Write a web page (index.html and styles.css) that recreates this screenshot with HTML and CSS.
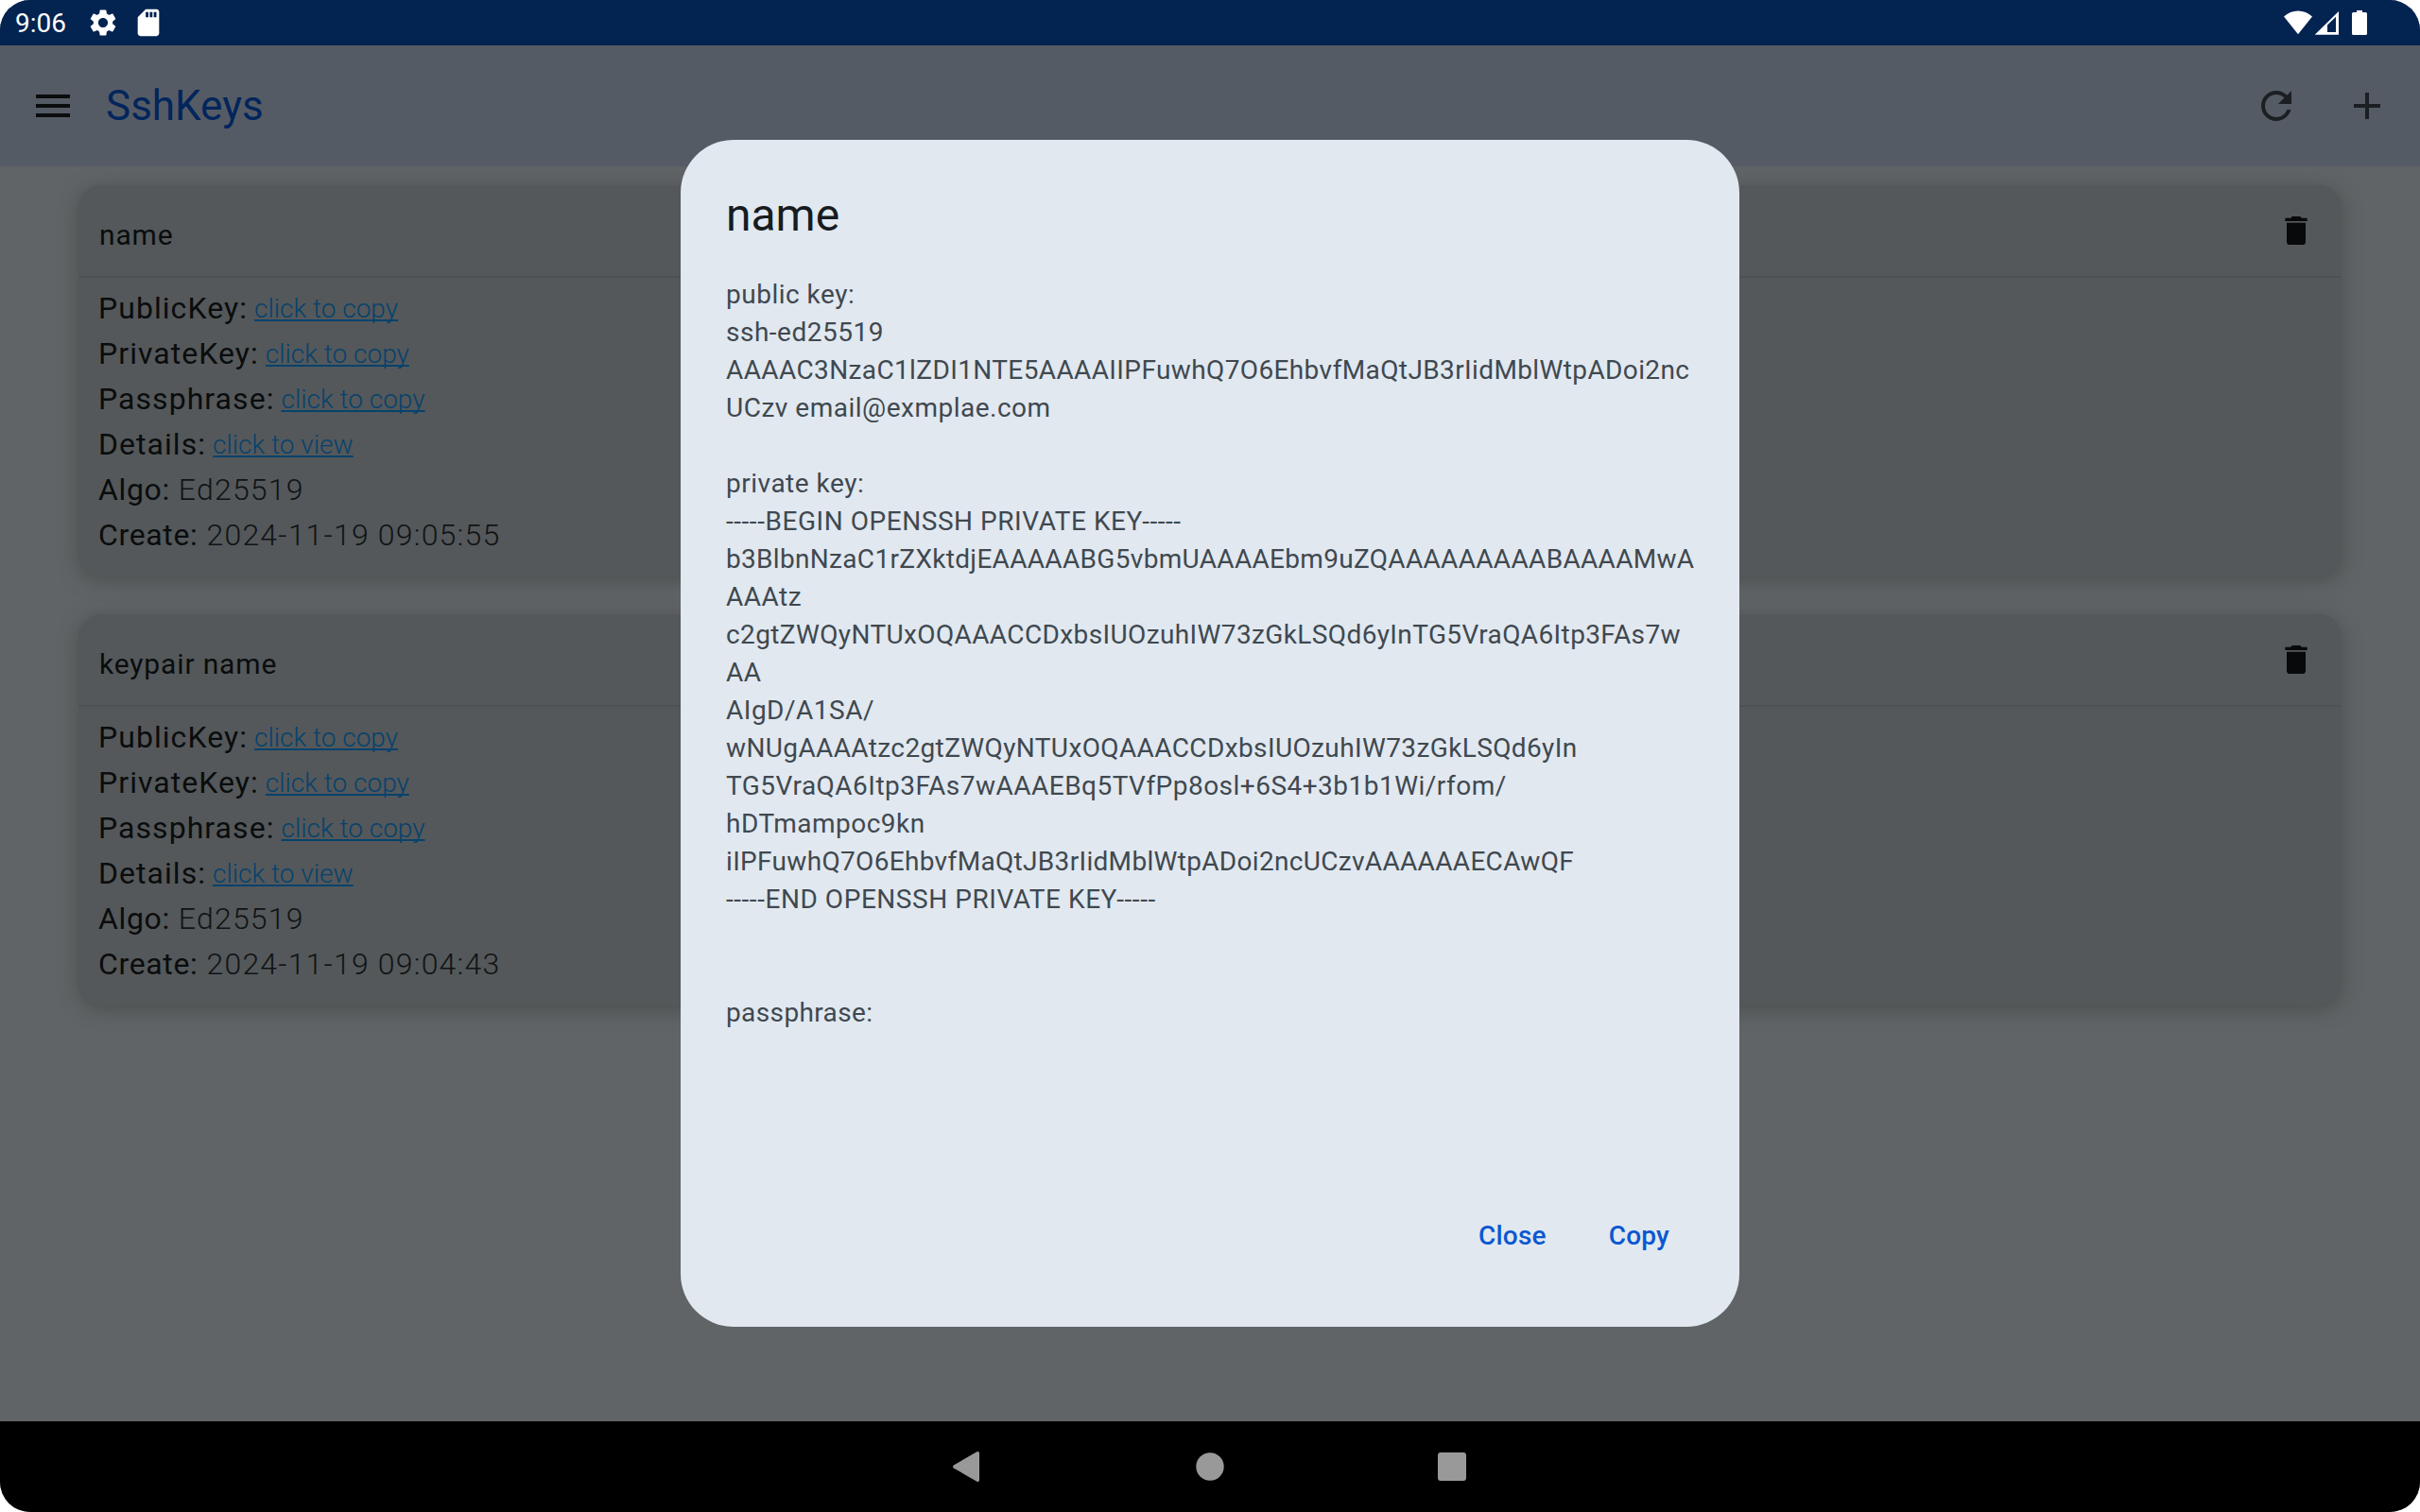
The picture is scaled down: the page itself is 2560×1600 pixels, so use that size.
FILE: index.html
```html
<!DOCTYPE html>
<html lang="en">
<head>
<meta charset="utf-8">
<title>SshKeys</title>
<link rel="stylesheet" href="styles.css">
</head>
<body>
<div class="screen">
  <header class="statusbar">
    <span class="clock">9:06</span>
    <svg class="status-icon" viewBox="0 0 24 24"><path d="M19.14 12.94c.04-.3.06-.61.06-.94 0-.32-.02-.64-.07-.94l2.03-1.58c.18-.14.23-.41.12-.61l-1.92-3.32c-.12-.22-.37-.29-.59-.22l-2.39.96c-.5-.38-1.03-.7-1.62-.94l-.36-2.54c-.04-.24-.24-.41-.48-.41h-3.84c-.24 0-.43.17-.47.41l-.36 2.54c-.59.24-1.13.57-1.62.94l-2.39-.96c-.22-.08-.47 0-.59.22L2.74 8.87c-.12.21-.08.47.12.61l2.03 1.58c-.05.3-.09.63-.09.94s.02.64.07.94l-2.03 1.58c-.18.14-.23.41-.12.61l1.92 3.32c.12.22.37.29.59.22l2.39-.96c.5.38 1.03.7 1.62.94l.36 2.54c.05.24.24.41.48.41h3.84c.24 0 .44-.17.47-.41l.36-2.54c.59-.24 1.13-.56 1.62-.94l2.39.96c.22.08.47 0 .59-.22l1.92-3.32c.12-.22.07-.47-.12-.61l-2.01-1.58zM12 15.6c-1.98 0-3.6-1.62-3.6-3.6s1.62-3.6 3.6-3.6 3.6 1.62 3.6 3.6-1.62 3.6-3.6 3.6z"/></svg>
    <svg class="status-icon" viewBox="0 0 24 24"><path d="M18 2h-8L4.02 8 4 20c0 1.1.9 2 2 2h12c1.1 0 2-.9 2-2V4c0-1.1-.9-2-2-2zm-6 6h-2V4h2v4zm3 0h-2V4h2v4zm3 0h-2V4h2v4z"/></svg>
    <svg class="system-icons" viewBox="0 0 96 48"><path d="M0 17.600Q6.500 11.400 15 11.400T30 17.600L15 36.300Z"/><path fill-rule="evenodd" d="M32.700 36.700L58 12V36.700ZM46 26.500V34H55V17.800Z"/><path d="M77 11h6v2h3.500q1.500 0 1.500 1.500v21q0 1.500-1.500 1.500h-13q-1.500 0-1.500-1.500v-21q0-1.500 1.500-1.500h3.500z"/></svg>
  </header>

  <nav class="appbar">
    <svg class="icon menu" viewBox="0 0 24 24"><path d="M3 18h18v-2H3v2zm0-5h18v-2H3v2zm0-7v2h18V6H3z"/></svg>
    <h1 class="app-title">SshKeys</h1>
    <svg class="icon" viewBox="0 0 24 24"><path d="M17.650 6.350C16.200 4.900 14.210 4 12 4c-4.420 0-7.990 3.580-7.990 8s3.570 8 7.990 8c3.730 0 6.840-2.550 7.730-6h-2.080c-.82 2.330-3.040 4-5.650 4-3.310 0-6-2.690-6-6s2.690-6 6-6c1.660 0 3.140.69 4.220 1.780L13 11h7V4l-2.350 2.350z"/></svg>
    <svg class="icon" viewBox="0 0 24 24"><path d="M19 13h-6v6h-2v-6H5v-2h6V5h2v6h6v2z"/></svg>
  </nav>

  <main class="content">
    <section class="card">
      <div class="card-head"><span class="card-name">name</span><svg class="trash" viewBox="0 0 24 24"><path d="M19 4h-3.500l-1-1h-5l-1 1H5v2h14M6 19a2 2 0 0 0 2 2h8a2 2 0 0 0 2-2V7H6v12z"/></svg></div>
      <div class="card-body">
        <p><b>PublicKey:</b><a>click to copy</a></p>
        <p><b>PrivateKey:</b><a>click to copy</a></p>
        <p><b>Passphrase:</b><a>click to copy</a></p>
        <p><b>Details:</b><a>click to view</a></p>
        <p><b class="plain">Algo:</b> Ed25519</p>
        <p><b class="plain">Create:</b> 2024-11-19 09:05:55</p>
      </div>
    </section>
    <section class="card">
      <div class="card-head"><span class="card-name">keypair name</span><svg class="trash" viewBox="0 0 24 24"><path d="M19 4h-3.500l-1-1h-5l-1 1H5v2h14M6 19a2 2 0 0 0 2 2h8a2 2 0 0 0 2-2V7H6v12z"/></svg></div>
      <div class="card-body">
        <p><b>PublicKey:</b><a>click to copy</a></p>
        <p><b>PrivateKey:</b><a>click to copy</a></p>
        <p><b>Passphrase:</b><a>click to copy</a></p>
        <p><b>Details:</b><a>click to view</a></p>
        <p><b class="plain">Algo:</b> Ed25519</p>
        <p><b class="plain">Create:</b> 2024-11-19 09:04:43</p>
      </div>
    </section>
  </main>

  <footer class="navbar">
    <svg viewBox="0 0 48 48"><path d="M8.800 22.400L33.400 8.300Q36 7.200 36 10V38Q36 40.800 33.400 39.700L8.800 25.600Q7.200 24 8.800 22.400Z"/></svg>
    <svg viewBox="0 0 48 48"><circle cx="24" cy="24" r="14.700"/></svg>
    <svg viewBox="0 0 48 48"><rect x="9" y="9" width="30" height="30" rx="3"/></svg>
  </footer>

  <div class="dialog" role="dialog">
    <h2 class="dialog-title">name</h2>
    <pre class="dialog-text">public key:
ssh-ed25519
<span class="snug">AAAAC3NzaC1lZDI1NTE5AAAAIIPFuwhQ7O6EhbvfMaQtJB3rIidMblWtpADoi2nc</span>
UCzv email@exmplae.com

private key:
<span class="loose">-----BEGIN OPENSSH PRIVATE KEY-----</span>
<span class="tight">b3BlbnNzaC1rZXktdjEAAAAABG5vbmUAAAAEbm9uZQAAAAAAAAABAAAAMwA</span>
AAAtz
<span class="snug">c2gtZWQyNTUxOQAAACCDxbsIUOzuhIW73zGkLSQd6yInTG5VraQA6Itp3FAs7w</span>
AA
AIgD/A1SA/
<span class="snug">wNUgAAAAtzc2gtZWQyNTUxOQAAACCDxbsIUOzuhIW73zGkLSQd6yIn</span>
<span class="near">TG5VraQA6Itp3FAs7wAAAEBq5TVfPp8osl+6S4+3b1b1Wi/rfom/</span>
hDTmampoc9kn
<span class="tight">iIPFuwhQ7O6EhbvfMaQtJB3rIidMblWtpADoi2ncUCzvAAAAAAECAwQF</span>
<span class="loose">-----END OPENSSH PRIVATE KEY-----</span>


<span class="snug">passphrase:</span></pre>
    <div class="dialog-actions"><button>Close</button><button>Copy</button></div>
  </div>
</div>
</body>
</html>
```
FILE: styles.css
```css
* { box-sizing: border-box; }
body { margin: 0; background: #fff; font-family: Roboto, sans-serif; }
h1, h2, p, pre { margin: 0; font-weight: 400; }

.screen {
  position: relative;
  display: flex;
  flex-direction: column;
  width: 2560px;
  height: 1600px;
  overflow: hidden;
  border-radius: 32px;
  background: #606466;
}

.statusbar {
  display: flex;
  align-items: center;
  height: 48px;
  padding: 0 48px 0 16px;
  background: #032351;
  color: #fff;
  fill: #fff;
}
.clock { width: 76px; font-size: 28px; line-height: 50px; padding-top: 2px; }
.status-icon { width: 34px; height: 34px; margin-right: 14px; }
.system-icons { width: 96px; height: 48px; margin-left: auto; }

.appbar {
  display: flex;
  align-items: center;
  gap: 48px;
  height: 128px;
  padding: 0 32px;
  background: #555b65;
  fill: #1b1f22;
}
.icon { width: 48px; height: 48px; }
.menu { fill: #0a0c0d; margin-right: -16px; }
.app-title { flex: 1; font-size: 44px; line-height: 56px; color: #02255c; }

.content {
  flex: 1;
  display: flex;
  flex-direction: column;
  gap: 40px;
  padding: 20px 83px;
}
.card {
  height: 414px;
  border-radius: 24px;
  background: #54585a;
  box-shadow: 0 4px 20px rgba(56, 58, 56, .5);
}
.card-head {
  display: flex;
  justify-content: space-between;
  height: 98px;
  padding: 28px 28px 0 22px;
  border-bottom: 2px solid #4d5153;
}
.card-name { font-size: 30px; line-height: 50px; letter-spacing: .85px; color: #0a0c0d; }
.trash { width: 40px; height: 40px; fill: #08090b; }
.card-body {
  padding: 8px 21px;
  font-size: 32px;
  line-height: 48px;
  letter-spacing: 1.2px;
  color: #101315;
}
.card-body p { height: 48px; font-weight: 300; white-space: pre; }
.card-body b { font-weight: 400; letter-spacing: 1.05px; color: #0a0c0d; }
.card-body .plain { letter-spacing: .65px; }
.card-body a {
  margin-left: 7px;
  vertical-align: 1px;
  font-size: 28px;
  line-height: 40px;
  letter-spacing: 0;
  color: #06426d;
  text-decoration: underline 2px;
  text-decoration-skip-ink: none;
  text-underline-offset: 2px;
}

.navbar {
  display: flex;
  align-items: center;
  justify-content: center;
  gap: 208px;
  height: 96px;
  background: #000;
  fill: #999;
}
.navbar svg { width: 48px; height: 48px; }

.dialog {
  position: absolute;
  left: 720px;
  top: 148px;
  display: flex;
  flex-direction: column;
  width: 1120px;
  height: 1256px;
  padding: 48px;
  border-radius: 56px;
  background: #e1e8f0;
}
.dialog-title { font-size: 48px; line-height: 64px; color: #171c20; }
.dialog-text {
  flex: 1;
  margin-top: 32px;
  font: 400 28px/40px Roboto, sans-serif;
  letter-spacing: .5px;
  color: #40484f;
}
.tight { letter-spacing: .32px; }
.snug { letter-spacing: .38px; }
.near { letter-spacing: .48px; }
.loose { letter-spacing: .55px; }

.dialog-actions { display: flex; justify-content: flex-end; gap: 18px; padding: 0 2px 28px 0; }
.dialog-actions button {
  padding: 0 24px;
  border: 0;
  background: none;
  font: 500 28px/40px Roboto, sans-serif;
  letter-spacing: .2px;
  color: #0b57d0;
}
```
